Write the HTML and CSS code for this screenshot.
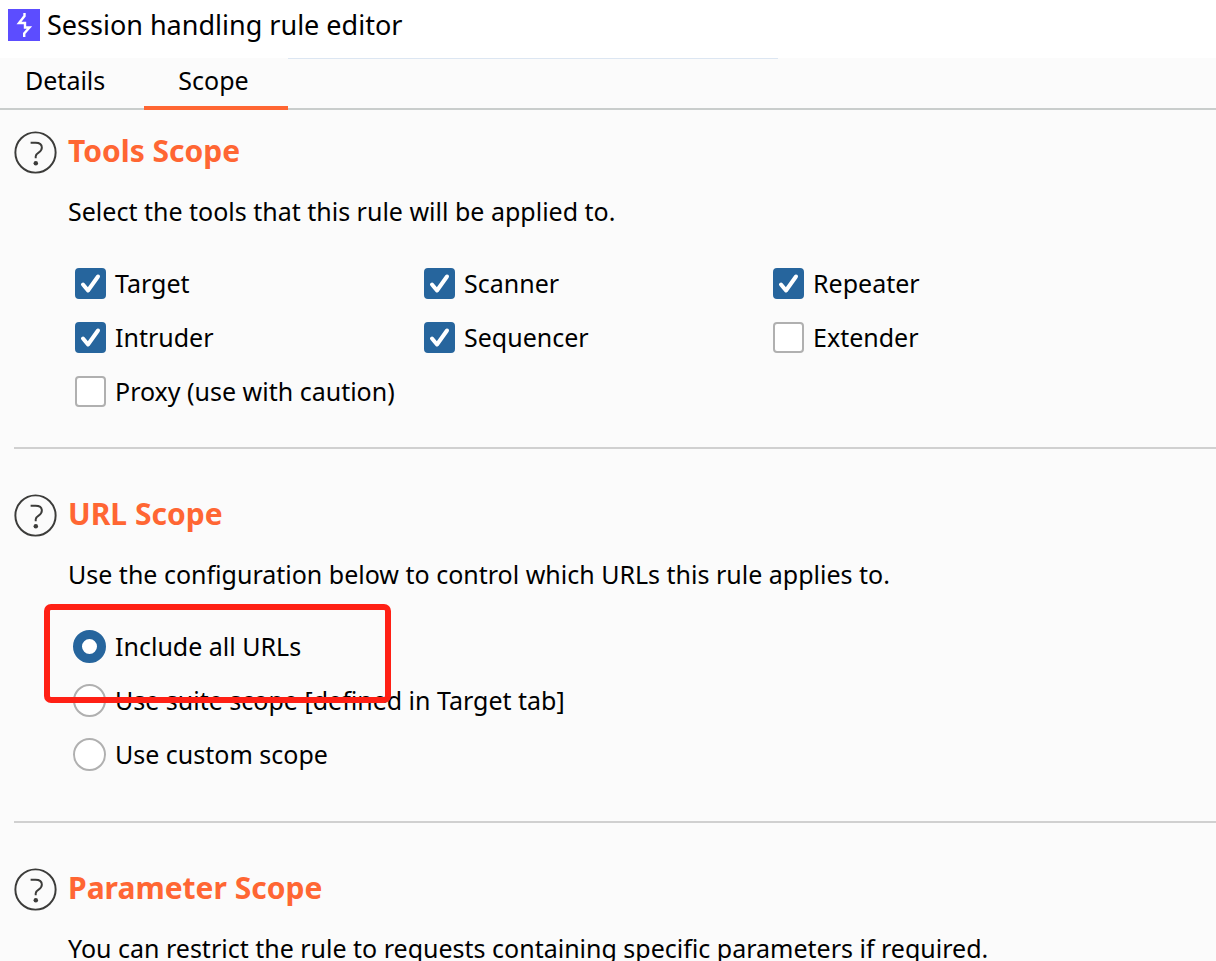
FILE: index.html
```html
<!DOCTYPE html>
<html lang="en">
<head>
<meta charset="utf-8">
<title>Session handling rule editor</title>
<link rel="stylesheet" href="styles.css">
</head>
<body>
<svg class="symbols" aria-hidden="true">
  <symbol id="help" viewBox="0 0 44 44">
    <circle cx="22" cy="22" r="20.6" fill="none" stroke="#3c3c3a" stroke-width="2"/>
    <path d="M17 12h5q6.500 0 6.500 5 0 3-3 4.800t-3.300 4.200v2" fill="none" stroke="#3c3c3a" stroke-width="2"/>
    <circle cx="22.300" cy="33" r="2.300" fill="#3c3c3a"/>
  </symbol>
</svg>
<header class="titlebar">
  <svg class="logo" viewBox="0 0 32 32" aria-hidden="true">
    <rect width="32" height="32" fill="#5c4dff"/>
    <path d="M16.500 4v3L11 14h6v4.500h4.500L16.200 24.500v3.500" fill="none" stroke="#fff" stroke-width="2.400"/>
  </svg>
  <h1 class="title">Session handling rule editor</h1>
</header>
<nav class="tabs" role="tablist">
  <button class="tab" role="tab" aria-selected="false">Details</button>
  <button class="tab tab-active" role="tab" aria-selected="true">Scope</button>
  <span class="tab-edge"></span>
</nav>
<main class="content">
  <section class="section section-tools">
    <button class="help" aria-label="Help for Tools Scope"><svg class="help-icon"><use href="#help"/></svg></button>
    <div class="body">
      <h2 class="heading">Tools Scope</h2>
      <p class="text">Select the tools that this rule will be applied to.</p>
      <div class="tools">
        <label class="option"><input class="check" type="checkbox" checked>Target</label>
        <label class="option"><input class="check" type="checkbox" checked>Scanner</label>
        <label class="option"><input class="check" type="checkbox" checked>Repeater</label>
        <label class="option"><input class="check" type="checkbox" checked>Intruder</label>
        <label class="option"><input class="check" type="checkbox" checked>Sequencer</label>
        <label class="option"><input class="check" type="checkbox">Extender</label>
        <label class="option"><input class="check" type="checkbox">Proxy (use with caution)</label>
      </div>
    </div>
  </section>
  <section class="section section-url">
    <button class="help" aria-label="Help for URL Scope"><svg class="help-icon"><use href="#help"/></svg></button>
    <div class="body">
      <h2 class="heading">URL Scope</h2>
      <p class="text">Use the configuration below to control which URLs this rule applies to.</p>
      <div class="urls">
        <label class="option"><input class="radio" type="radio" name="url" checked>Include all URLs</label>
        <label class="option"><input class="radio" type="radio" name="url">Use suite scope [defined in Target tab]</label>
        <label class="option"><input class="radio" type="radio" name="url">Use custom scope</label>
        <span class="highlight"></span>
      </div>
    </div>
  </section>
  <section class="section section-parameter">
    <button class="help" aria-label="Help for Parameter Scope"><svg class="help-icon"><use href="#help"/></svg></button>
    <div class="body">
      <h2 class="heading">Parameter Scope</h2>
      <p class="text">You can restrict the rule to requests containing specific parameters if required.</p>
    </div>
  </section>
</main>
</body>
</html>
```
FILE: styles.css
```css
* { box-sizing: border-box; }
html { height: 100%; overflow: hidden; }
body {
  height: 100%;
  margin: 0;
  overflow: hidden;
  background: #fbfbfb;
  color: #000;
  font: 25px/40px "Noto Sans", "Open Sans", sans-serif;
}
button { padding: 0; border: 0; background: none; color: inherit; font: inherit; }
.symbols { display: none; }
.titlebar {
  display: flex;
  align-items: center;
  gap: 7px;
  height: 58px;
  padding: 0 8px 8px;
  background: #fff;
}
.logo { width: 32px; height: 32px; }
.title { margin: 0; font-size: 27px; font-weight: 400; line-height: 42px; }
.tabs {
  display: flex;
  height: 52px;
  border-bottom: 2px solid #c9cdcc;
}
.tab {
  height: 52px;
  padding: 0 39px 4px 25px;
  border-bottom: 4px solid transparent;
}
.tab-active { padding: 0 39px 4px 34px; border-bottom-color: #ff6633; }
.tab-edge { width: 490px; height: 1px; background: #dce6f2; }
.section {
  display: flex;
  align-items: flex-start;
  gap: 11px;
  margin-left: 14px;
  padding-top: 45px;
}
.section-tools { padding-top: 21px; padding-bottom: 29px; border-bottom: 2px solid #d0d0d0; }
.section-url { padding-bottom: 40px; border-bottom: 2px solid #d0d0d0; }
.help { flex: none; width: 43px; height: 43px; }
.help-icon { display: block; width: 43px; height: 43px; }
.body { flex: 1; min-width: 0; }
.heading { margin: 0; color: #ff6633; font-size: 30px; font-weight: 700; line-height: 40px; }
.text { margin: 20px 0 25px; white-space: nowrap; }
.tools { display: grid; grid-template-columns: repeat(3, 349px); padding-left: 7px; }
.urls { position: relative; padding-left: 5px; }
.option { display: flex; align-items: center; gap: 9px; height: 54px; }
.check, .radio { flex: none; margin: 0; appearance: none; background: #fff; border: 2px solid #b0b0b0; }
.check { width: 31px; height: 31px; border-radius: 4px; }
.check:checked {
  border-color: #26659d;
  background: #26659d url('data:image/svg+xml,<svg xmlns="http://www.w3.org/2000/svg" viewBox="0 0 27 27"><path d="M6 14.500l5 6L21 6.500" fill="none" stroke="white" stroke-width="4" stroke-linecap="round" stroke-linejoin="round"/></svg>') center / 27px 27px no-repeat;
}
.radio { width: 33px; height: 33px; border-radius: 50%; }
.radio:checked { border: 9px solid #26659d; }
.highlight {
  position: absolute;
  top: -15px;
  left: -24px;
  width: 347px;
  height: 99px;
  border: 6px solid #ff2015;
  border-radius: 7px;
  pointer-events: none;
}
```
